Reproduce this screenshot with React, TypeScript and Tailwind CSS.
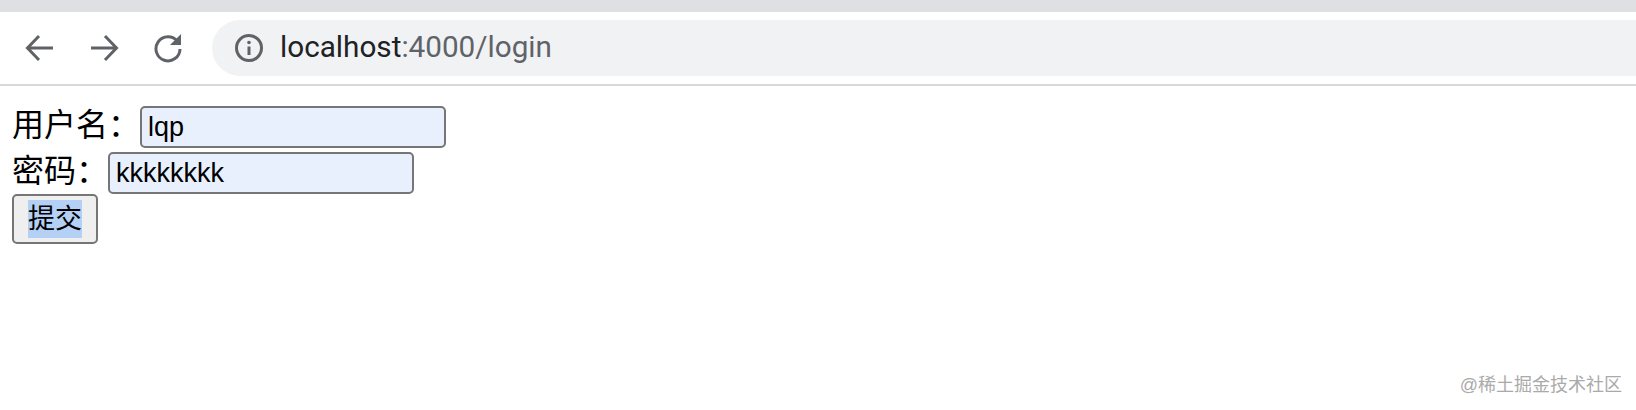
import React from "react";

const cjk = "font-['Liberation_Sans','Noto_Sans_CJK_SC',sans-serif]";

const Field = ({ label, value }: { label: string; value: string }) => (
    <div className="flex items-center h-[42px] mb-1">
        <span className={`${cjk} text-[32px] leading-none text-black pb-[4px]`}>{label}</span>
        <input
            readOnly
            value={value}
            className={`${cjk} w-[306px] h-[42px] px-[6px] text-[27px] text-black bg-[#e8f0fe] border-2 border-[#767676] rounded-[5px] outline-none`}
        />
    </div>
);

export default function App() {
    return (
        <div className="relative w-[1636px] h-[410px] bg-white overflow-hidden">
            <div className="h-[12px] bg-[#dfe0e3]" />
            <div className="flex items-center h-[72px] pl-[24px] bg-white">
                <svg width="32" height="32" viewBox="0 0 32 32" fill="none" stroke="#5f6368" strokeWidth="3" className="mr-[32px]">
                    <path d="M29 16H4M15 4 3.500 16 15 28" />
                </svg>
                <svg width="32" height="32" viewBox="0 0 32 32" fill="none" stroke="#5f6368" strokeWidth="3" className="mr-[32px]">
                    <path d="M3 16h25M17 4l11.500 12L17 28" />
                </svg>
                <svg width="32" height="32" viewBox="0 0 32 32" fill="none" className="mr-[28px] -mt-[3px]">
                    <path d="M25.500 10.500A12 12 0 1 0 28 18" stroke="#5f6368" strokeWidth="3" />
                    <path d="M29 3v11H18z" fill="#5f6368" />
                </svg>
                <div className="flex items-center flex-1 h-[56px] pl-[22px] bg-[#f1f2f4] rounded-l-[28px]">
                    <svg width="30" height="30" viewBox="0 0 30 30" fill="none" className="mr-[16px] shrink-0">
                        <circle cx="15" cy="15" r="12.500" stroke="#5f6368" strokeWidth="3" />
                        <path d="M15 13.500V22" stroke="#5f6368" strokeWidth="3" />
                        <circle cx="15" cy="9.500" r="1.800" fill="#5f6368" />
                    </svg>
                    <span className="font-['Roboto',sans-serif] text-[29.700px] text-[#202124] -mt-[2px]">
                        localhost<span className="text-[#5f6368]">:4000/login</span>
                    </span>
                </div>
            </div>
            <div className="h-[2px] bg-[#d9d9d9]" />
            <div className="pl-[12px] pt-[20px]">
                <Field label="用户名：" value="lqp" />
                <Field label="密码：" value="kkkkkkkk" />
                <button className={`${cjk} block w-[86px] h-[50px] -mt-[4px] text-[27px] text-black bg-[#efefef] border-2 border-[#767676] rounded-[5px]`}>
                    <span className="bg-[#b4d0f4] py-[4px]">提交</span>
                </button>
            </div>
            <div className={`${cjk} absolute right-[14px] bottom-[16px] text-[18px] leading-none text-[#aaaaaa]`}>@稀土掘金技术社区</div>
        </div>
    );
}
